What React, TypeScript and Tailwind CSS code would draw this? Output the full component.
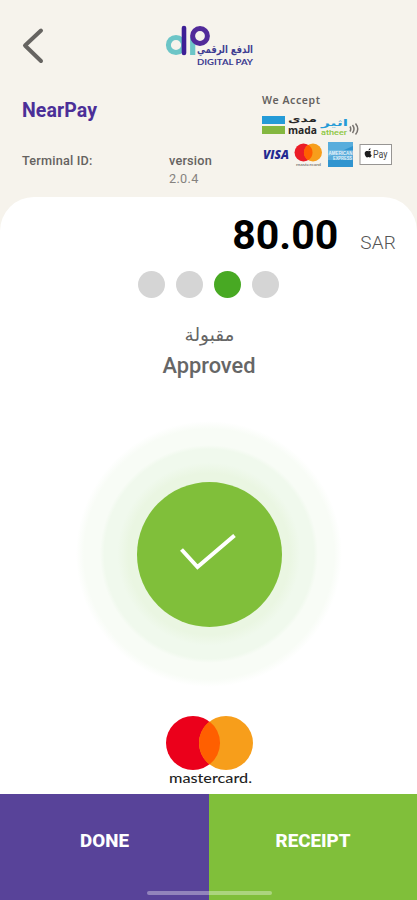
function DigitalPayLogo() {
  return (
    <svg width="96" height="48" viewBox="0 0 96 48" className="ml-[121px] mt-[22px]">
      <circle cx="11" cy="23" r="7.6" fill="none" stroke="#6cc5c7" strokeWidth="5" />
      <path d="M27.700 15V33" stroke="#6cc5c7" strokeWidth="5.200" />
      <circle cx="35" cy="14" r="7.4" fill="none" stroke="#512a99" strokeWidth="5" />
      <path d="M19 6V31" stroke="#3d1f96" strokeWidth="4.6" strokeLinecap="round" />
      <g transform="translate(88 31) scale(0.86 1.1)">
        <text x="0" y="0" direction="rtl" fontSize="9.800" fontWeight="700" fill="#3d3c91" className="font-['DejaVu_Sans',sans-serif]">الدفع الرقمي</text>
      </g>
      <text x="32" y="43" textLength="56" lengthAdjust="spacingAndGlyphs" fontSize="8" fontWeight="700" fill="#3d3c91" className="font-[Lato,sans-serif]">DIGITAL PAY</text>
    </svg>
  );
}

function MadaLogo() {
  return (
    <svg width="98" height="24" viewBox="0 0 98 24">
      <rect x="0" y="2" width="23" height="8" fill="#259bd7" />
      <rect x="0" y="12" width="23" height="8" fill="#84b740" />
      <text x="55" y="8" direction="rtl" textLength="29" lengthAdjust="spacingAndGlyphs" fontSize="9" fontWeight="700" fill="#262626" className="font-['DejaVu_Sans',sans-serif]">مدى</text>
      <text x="26" y="20" textLength="29" lengthAdjust="spacingAndGlyphs" fontSize="11" fontWeight="700" fill="#262626" className="font-['Open_Sans',sans-serif]">mada</text>
      <text x="86" y="11.500" direction="rtl" textLength="27" lengthAdjust="spacingAndGlyphs" fontSize="9" fontWeight="700" fill="#259bd7" className="font-['DejaVu_Sans',sans-serif]">اثير</text>
      <text x="59" y="21" textLength="26" lengthAdjust="spacingAndGlyphs" fontSize="8" fontWeight="500" fill="#8cc63f" className="font-[Roboto,sans-serif]">atheer</text>
      <path d="M88 12.5q1.5 2.5 0 5M90.5 11q3 4 0 8M93.5 9.5q4.5 5.500 0 11" fill="none" stroke="#77736f" strokeWidth="1.5" />
    </svg>
  );
}

function CardLogos() {
  return (
    <svg width="132" height="27" viewBox="0 0 132 27">
      <text x="1" y="17" textLength="26" lengthAdjust="spacingAndGlyphs" fontSize="11.500" fontWeight="800" fontStyle="italic" fill="#242a91" className="font-['Open_Sans',sans-serif]">VISA</text>
      <circle cx="41.500" cy="10.500" r="9" fill="#eb1c26" />
      <circle cx="51" cy="10.500" r="9" fill="#f79e1b" />
      <path d="M46.2 2.800a9 9 0 0 1 0 15.400a9 9 0 0 1 0-15.400Z" fill="#ff5f00" />
      <text x="34" y="23.500" textLength="25" lengthAdjust="spacingAndGlyphs" fontSize="4.500" fill="#5b5855" className="font-[Lato,sans-serif]">mastercard</text>
      <rect x="66" y="0" width="25" height="25" fill="#3094cf" />
      <path d="M66 0h25v4L66 15Z" fill="#58addc" />
      <rect x="66" y="8" width="25" height="10" fill="#8cc7e8" opacity=".45" />
      <text x="66.500" y="12.500" textLength="24" lengthAdjust="spacingAndGlyphs" fontSize="4.500" fontWeight="700" fill="#e6f3fa" className="font-['Liberation_Sans',sans-serif]">AMERICAN</text>
      <text x="71" y="17.800" textLength="19" lengthAdjust="spacingAndGlyphs" fontSize="4.500" fontWeight="700" fill="#e6f3fa" className="font-['Liberation_Sans',sans-serif]">EXPRESS</text>
      <rect x="98" y="2.500" width="31.500" height="20" fill="#fff" stroke="#979593" strokeWidth="1" />
      <path d="M106.500 8.500c.1-1.300.8-2.200 2-2.300c0 1.300-.8 2.200-2 2.300ZM109.200 9.700c-.9-1.100-2-.9-2.900-.5c-1.100-.6-2.600-.4-3.300.9c-.9 1.700.3 4.800 1.900 5.300c.5.100.9-.3 1.500-.3s.9.300 1.500.3c.9-.2 1.500-1.400 1.800-2.200c-1.600-.7-1.500-2.700-.5-3.500Z" fill="#1d1d1f" />
      <text x="111" y="15.500" textLength="14.500" lengthAdjust="spacingAndGlyphs" fontSize="10" fill="#4a4a4a" className="font-[Roboto,sans-serif]">Pay</text>
    </svg>
  );
}

function MastercardLogo() {
  return (
    <svg width="90" height="72" viewBox="0 0 90 72">
      <circle cx="29" cy="28" r="27" fill="#eb001b" />
      <circle cx="62" cy="28" r="27" fill="#f79e1b" />
      <path d="M45.500 6.600a27 27 0 0 1 0 42.800a27 27 0 0 1 0-42.800Z" fill="#ff5f00" />
      <text x="5" y="68" textLength="83" lengthAdjust="spacingAndGlyphs" fontSize="13" fontWeight="500" fill="#1f1f1f" className="font-[Lato,sans-serif]">mastercard.</text>
    </svg>
  );
}

export default function App() {
  return (
    <div className="flex h-[900px] w-[417px] flex-col overflow-hidden bg-[#f6f3ec] font-[Roboto,sans-serif]">
      <header className="flex h-[197px] shrink-0 flex-col">
        <div className="flex h-[93px] shrink-0 items-start pl-[22px]">
          <button type="button" aria-label="Back" className="mt-[27px]">
            <svg width="22" height="38" viewBox="0 0 22 38" fill="none" stroke="#666461" strokeWidth="4" strokeLinecap="round" strokeLinejoin="round">
              <path d="M19 3.500L3 18.500L19 34" />
            </svg>
          </button>
          <DigitalPayLogo />
        </div>
        <div className="flex pl-[22px]">
          <div className="w-[240px]">
            <h1 className="mt-[6px] h-[24px] text-[19.500px] leading-[24px] font-bold tracking-[0.1px] text-[#4b2f98]">NearPay</h1>
            <div className="mt-[29px] flex text-[12.700px] leading-[18px] text-[#65625f]">
              <p className="w-[147px] font-medium tracking-[0.2px]">Terminal ID:</p>
              <div>
                <p className="font-medium tracking-[0.2px]">version</p>
                <p className="tracking-[0.3px] text-[#85827e]">2.0.4</p>
              </div>
            </div>
          </div>
          <div className="flex flex-col">
            <p className="h-[21px] font-['Noto_Sans',sans-serif] text-[10.500px] leading-[15px] font-semibold tracking-[0.6px] text-[#65625f]">We Accept</p>
            <MadaLogo />
            <div className="mt-[4px]">
              <CardLogos />
            </div>
          </div>
        </div>
      </header>

      <main className="flex h-[597px] shrink-0 flex-col items-center rounded-t-[34px] bg-white">
        <div className="flex h-[74px] w-full items-baseline justify-end gap-[22px] pt-[13px] pr-[21px]">
          <span className="text-[41px] leading-[50px] font-bold text-black">80.00</span>
          <span className="text-[19px] font-light tracking-[0.2px] text-[#555]">SAR</span>
        </div>
        <div className="flex gap-[11px]">
          <span className="size-[27px] rounded-full bg-[#d5d5d5]" />
          <span className="size-[27px] rounded-full bg-[#d5d5d5]" />
          <span className="size-[27px] rounded-full bg-[#48a923]" />
          <span className="size-[27px] rounded-full bg-[#d5d5d5]" />
        </div>
        <p dir="rtl" className="mt-[22px] h-[30px] pl-[2px] font-['DejaVu_Sans',sans-serif] text-[18.500px] leading-[30px] text-[#666]">مقبولة</p>
        <p className="mt-px h-[30px] pl-px text-[21.800px] leading-[30px] font-medium text-[#666]">Approved</p>

        <div className="mt-[40px] ml-px flex size-[266px] shrink-0 items-center justify-center rounded-full bg-[radial-gradient(circle_closest-side,#f8fcf6_94%,#ffffff_100%)]">
          <div className="flex size-[218px] items-center justify-center rounded-full bg-[radial-gradient(circle_closest-side,#eaf6e2_74%,#f0f9ed_84%,#f0f9ed_96%,#f8fcf6_100%)]">
            <div className="flex size-[145px] items-center justify-center rounded-full bg-[#80bf3a]">
              <svg width="56" height="38" viewBox="0 0 56 38" fill="none" stroke="#fff" strokeWidth="4" className="mr-[3px] mb-[3px]">
                <path d="M1.500 15.500L17.500 33L54.500 1.500" />
              </svg>
            </div>
          </div>
        </div>

        <div className="mt-[28px]">
          <MastercardLogo />
        </div>
      </main>

      <footer className="relative flex h-[106px] shrink-0 text-[18.800px] font-extrabold text-white">
        <button type="button" className="w-[209px] bg-[#584399] pb-[11px]">DONE</button>
        <button type="button" className="w-[208px] bg-[#80bf3a] pb-[11px]">RECEIPT</button>
        <span className="absolute bottom-[5px] left-[147px] h-[4px] w-[125px] rounded-full bg-white/35" />
      </footer>
    </div>
  );
}
